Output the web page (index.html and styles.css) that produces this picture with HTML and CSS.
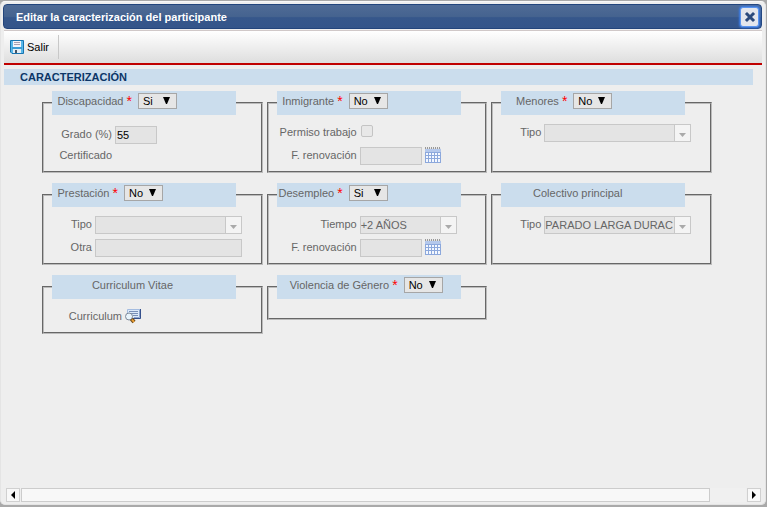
FILE: index.html
```html
<!DOCTYPE html>
<html lang="es">
<head>
    <meta charset="UTF-8">
    <meta name="viewport" content="width=device-width, initial-scale=1.0">
    <title>Editar la caracterización del participante</title>
    <link rel="stylesheet" href="styles.css">
</head>
<body>
    <div class="window">
        <div class="title-bar">
            <h1>Editar la caracterización del participante</h1>
            <button type="button" class="close" aria-label="Cerrar">
                <svg width="12" height="12" viewBox="0 0 12 12"><path d="M3 3l6 6M9 3l-6 6" stroke="#2b4a7c" stroke-width="3" stroke-linecap="square"/></svg>
            </button>
        </div>
        <div class="toolbar">
            <button type="button" class="tool">
                <svg width="14" height="14" viewBox="0 0 14 14">
                    <path d="M.5 .5h13v13H2l-1.500-1.500z" fill="#58b8ea" stroke="#1874b0"/>
                    <path d="M3 1h8v6H3z" fill="#f4f4fa"/>
                    <path d="M4 2.500h6M4 4.500h6" stroke="#a8a0b0"/>
                    <path d="M2 7h10v2H2z" fill="#3c9cd4"/>
                    <path d="M3 9h8v4H3z" fill="#e4eef6"/>
                    <path d="M5 10h2v3H5z" fill="#456"/>
                </svg>
                Salir
            </button>
        </div>
        <h2 class="section">CARACTERIZACIÓN</h2>

        <form class="groups">
            <fieldset class="tight">
                <legend>
                    <label for="discapacidad" class="wide-80">Discapacidad <b>*</b></label>
                    <select id="discapacidad"><option>Si</option><option>No</option></select>
                </legend>
                <div class="field label-60 low">
                    <label for="grado">Grado (%)</label>
                    <input type="text" id="grado" class="short active" value="55">
                </div>
                <div class="field label-60"><span class="caption">Certificado</span></div>
            </fieldset>

            <fieldset>
                <legend>
                    <label for="inmigrante" class="wide-66">Inmigrante <b>*</b></label>
                    <select id="inmigrante"><option>No</option><option>Si</option></select>
                </legend>
                <div class="field label-80">
                    <label for="permiso">Permiso trabajo</label>
                    <input type="checkbox" id="permiso" disabled>
                </div>
                <div class="field label-80">
                    <label for="renovacion1">F. renovación</label>
                    <input type="text" id="renovacion1" class="date" disabled>
                    <button type="button" class="icon" aria-label="Calendario">
                        <svg width="16" height="16" viewBox="0 0 16 16"><use href="#calendar"/></svg>
                    </button>
                </div>
            </fieldset>

            <fieldset>
                <legend>
                    <label for="menores" class="wide-66">Menores <b>*</b></label>
                    <select id="menores"><option>No</option><option>Si</option></select>
                </legend>
                <div class="field label-40">
                    <label for="tipo1">Tipo</label>
                    <select id="tipo1" class="combo long" disabled><option></option></select>
                </div>
            </fieldset>

            <fieldset>
                <legend>
                    <label for="prestacion" class="wide-66">Prestación <b>*</b></label>
                    <select id="prestacion"><option>No</option><option>Si</option></select>
                </legend>
                <div class="field label-40">
                    <label for="tipo2">Tipo</label>
                    <select id="tipo2" class="combo long" disabled><option></option></select>
                </div>
                <div class="field label-40">
                    <label for="otra">Otra</label>
                    <input type="text" id="otra" class="long" disabled>
                </div>
            </fieldset>

            <fieldset>
                <legend>
                    <label for="desempleo" class="wide-66">Desempleo <b>*</b></label>
                    <select id="desempleo"><option>Si</option><option>No</option></select>
                </legend>
                <div class="field label-80">
                    <label for="tiempo">Tiempo</label>
                    <select id="tiempo" class="combo medium" disabled><option>+2 AÑOS</option></select>
                </div>
                <div class="field label-80">
                    <label for="renovacion2">F. renovación</label>
                    <input type="text" id="renovacion2" class="date" disabled>
                    <button type="button" class="icon" aria-label="Calendario">
                        <svg width="16" height="16" viewBox="0 0 16 16"><use href="#calendar"/></svg>
                    </button>
                </div>
            </fieldset>

            <fieldset>
                <legend><span class="wide-120">Colectivo principal</span></legend>
                <div class="field label-40">
                    <label for="tipo3">Tipo</label>
                    <select id="tipo3" class="combo long" disabled><option>PARADO LARGA DURAC</option></select>
                </div>
            </fieldset>

            <fieldset>
                <legend><span class="wide-120">Curriculum Vitae</span></legend>
                <div class="field label-70">
                    <span class="caption">Curriculum</span>
                    <button type="button" class="icon" aria-label="Ver curriculum">
                        <svg width="16" height="16" viewBox="0 0 16 16">
                            <path d="M2.500 1.500h13v9h-13z" fill="#dceafa" stroke="#a4bce0"/>
                            <path d="M15.500 1v9.500H8" fill="none" stroke="#34508c"/>
                            <path d="M14.500 2v7.500H9" fill="none" stroke="#8ca4cc"/>
                            <path d="M4 3.500h9M5 5.500h8M8 7.500h5" stroke="#7890b8"/>
                            <circle cx="4" cy="8.500" r="3.500" fill="#e8f4fc" stroke="#7c8898"/>
                            <path d="M6.500 11l2.500 3" stroke="#6c4c20" stroke-width="4"/>
                            <path d="M7 11.500l2 2.500" stroke="#f0a030" stroke-width="2"/>
                        </svg>
                    </button>
                </div>
            </fieldset>

            <fieldset>
                <legend>
                    <label for="violencia" class="wide-120">Violencia de Género <b>*</b></label>
                    <select id="violencia"><option>No</option><option>Si</option></select>
                </legend>
            </fieldset>
        </form>

        <div class="scrollbar">
            <button type="button" aria-label="Izquierda"><svg width="4" height="8" viewBox="0 0 4 8"><path d="M4 0v8L0 4z"/></svg></button>
            <div class="track"><div class="thumb"></div></div>
            <button type="button" aria-label="Derecha"><svg width="4" height="8" viewBox="0 0 4 8"><path d="M0 0v8l4-4z"/></svg></button>
        </div>
    </div>

    <svg class="symbols" width="0" height="0">
        <symbol id="calendar" viewBox="0 0 16 16">
            <path d="M0 1h16v15H0z" fill="#8ca8dc"/>
            <path d="M0 2h16v3H0z" fill="#b4c8ec"/>
            <path d="M0 1.500h16" stroke="#e4e4e4"/>
            <path d="M.5 0v2M2.500 0v2M4.500 0v2M6.500 0v2M8.500 0v2M10.500 0v2M12.500 0v2M14.500 0v2" stroke="#999"/>
            <path d="M1 6h2v2H1zM4 6h2v2H4zM7 6h2v2H7zM10 6h2v2h-2zM13 6h2v2h-2zM1 9h2v2H1zM4 9h2v2H4zM7 9h2v2H7zM10 9h2v2h-2zM13 9h2v2h-2zM1 12h2v3H1zM4 12h2v3H4zM7 12h2v3H7zM10 12h2v3h-2zM13 12h2v3h-2z" fill="#f4f8ff"/>
        </symbol>
    </svg>
</body>
</html>
```
FILE: styles.css
```css
* {
    box-sizing: border-box;
}

body {
    margin: 0;
    padding: 1px 1px 2px 0;
    height: 100vh;
    background-color: #a9a9a9;
    font-family: Arial, "Liberation Sans", sans-serif;
    font-size: 11px;
    color: #666;
    overflow: hidden;
}

.window {
    display: flex;
    flex-direction: column;
    height: 100%;
    padding: 2px 3px;
    background-color: #eee;
    border: 1px solid #e4e4e4;
    border-top-color: #f8f8f8;
    border-radius: 5px;
}

.title-bar {
    display: flex;
    align-items: center;
    justify-content: space-between;
    height: 25px;
    margin-left: -1px;
    padding: 0 2px 0 12px;
    background: linear-gradient(#4f6b96, #45638f 50%, #36578b 55%, #34558a);
    border: 1px solid #23457c;
    border-radius: 4px;
}

.title-bar h1 {
    margin: 0;
    font-size: 11px;
    line-height: 16px;
    color: #fff;
}

button {
    font: inherit;
    padding: 0;
    background: none;
    border: 0;
}

.close {
    display: flex;
    align-items: center;
    justify-content: center;
    width: 19px;
    height: 20px;
    background-color: #e3e6ed;
    border: 1px solid #5a94ee;
    border-radius: 3px;
    box-shadow: 0 0 2px 1px #3c7ce4;
}

.toolbar {
    display: flex;
    align-items: center;
    height: 35px;
    margin-top: 1px;
    background: linear-gradient(#fff, #dedede);
    border-top: 1px solid #d0c8c8;
    border-bottom: 2px solid #c00000;
}

.tool {
    display: flex;
    align-items: center;
    gap: 3px;
    height: 24px;
    padding: 0 9px 0 6px;
    color: #000;
    border-right: 1px solid #c8c8c8;
}

.section {
    margin: 4px 9px 6px 0;
    padding-left: 16px;
    background-color: #cbdded;
    font-size: 11px;
    line-height: 16px;
    color: #0c3668;
}

.groups {
    display: grid;
    grid-template-columns: repeat(3, 1fr);
    gap: 10px 4px;
    margin: 0 50px 0 38px;
}

fieldset {
    display: flex;
    flex-direction: column;
    gap: 5px;
    min-width: 0;
    min-height: 45px;
    margin: 0;
    padding: 9px 8px 6px;
    border: 2px groove #bbb;
}

/* the last row keeps its natural heights */
fieldset:nth-child(n+7) {
    align-self: start;
}

.tight {
    gap: 3px;
}

legend {
    display: flex;
    gap: 6px;
    width: 184px;
    height: 24px;
    padding: 2px 0;
    background-color: #cbdded;
    line-height: 16px;
}

legend label,
legend span {
    text-align: right;
    white-space: nowrap;
}

legend b {
    font-size: 14px;
    font-weight: normal;
    line-height: 12px;
    vertical-align: -1px;
    color: #f00;
}

.wide-66 { width: 66px; }
.wide-80 { width: 80px; }
.wide-120 { width: 121px; }

.field {
    display: flex;
    gap: 3px;
    min-height: 18px;
    line-height: 16px;
}

.field label,
.caption {
    text-align: right;
    white-space: nowrap;
}

.label-40 > :first-child { width: 40px; }
.label-60 > :first-child { width: 60px; }
.label-70 > :first-child { width: 70px; }
.label-80 > :first-child { width: 80px; }

.low {
    margin-top: 2px;
}

select {
    appearance: none;
    width: 39px;
    height: 16px;
    margin: 0;
    padding: 0 4px;
    font: inherit;
    line-height: 14px;
    color: #000;
    background: #e6e6e6 url("data:image/svg+xml,%3Csvg xmlns='http://www.w3.org/2000/svg' width='7' height='7'%3E%3Cpath d='M0 0h7L4 7H3z'/%3E%3C/svg%3E") no-repeat right 6px top 3px;
    border: 1px solid #a6a6a6;
    border-radius: 0;
}

input[type="text"] {
    height: 18px;
    margin: 0;
    padding: 0 1px;
    font: inherit;
    color: #666;
    background-color: #e4e4e4;
    border: 1px solid #c8c8c8;
}

input[type="text"].active {
    color: #000;
}

input.short {
    width: 42px;
}

input.date {
    width: 62px;
}

/* disabled drop-down with its trigger on the right */
.combo {
    height: 18px;
    padding: 0 17px 0 0;
    line-height: 16px;
    color: #666;
    opacity: 1;
    background: #e4e4e4 url("data:image/svg+xml,%3Csvg xmlns='http://www.w3.org/2000/svg' width='16' height='16'%3E%3Cpath d='M0 0h16v16H0z' fill='%23f4f4f4'/%3E%3Cpath d='M0 0h1v16H0z' fill='%23c8c8c8'/%3E%3Cpath d='M5 8h7l-3.500 4z' fill='%23aaa'/%3E%3C/svg%3E") no-repeat right center;
    border-color: #c8c8c8;
}

.long {
    width: 147px;
}

.medium {
    width: 97px;
}

input[type="checkbox"] {
    appearance: none;
    width: 12px;
    height: 12px;
    margin: 1px;
    background-color: #e8e8e8;
    border: 1px solid #c4c4c4;
    border-radius: 2px;
}

.icon {
    height: 16px;
    line-height: 0;
}

.scrollbar {
    display: flex;
    gap: 1px;
    height: 14px;
    margin: auto 1px 0 2px;
}

.scrollbar button {
    display: flex;
    align-items: center;
    justify-content: center;
    width: 14px;
    background-color: #f8f8f8;
    border: 1px solid #d0d0d0;
}

.track {
    flex: 1;
    background-color: #f0f0f0;
}

.thumb {
    width: 95%;
    height: 14px;
    background-color: #f8f8f8;
    border: 1px solid #ccc;
}

.symbols {
    display: block;
}
```
